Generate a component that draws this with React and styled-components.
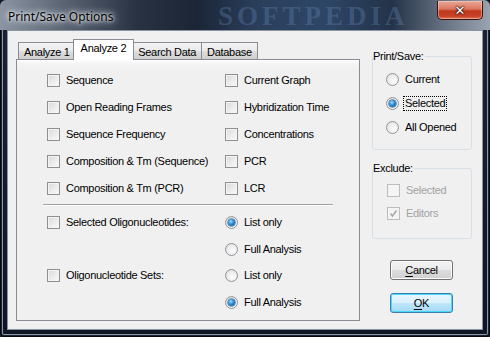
import React from 'react';
import styled, { createGlobalStyle, css } from 'styled-components';

const GlobalStyle = createGlobalStyle`
  html, body {
    margin: 0;
    padding: 0;
    background: #0f1828;
  }
  * {
    box-sizing: border-box;
  }
`;

const uiFont = `"Liberation Sans", Arial, sans-serif`;

const Window = styled.div`
  position: relative;
  width: 490px;
  height: 337px;
  background: linear-gradient(to bottom, #1b2435 0%, #121b2c 60%, #0e1626 100%);
  border-radius: 6px 6px 4px 4px;
  box-shadow: inset 0 0 0 1px #05080f, inset 0 0 0 2px #1a2333, inset 0 0 0 3px #8d97a6;
  overflow: hidden;
  display: flex;
  flex-direction: column;
`;

const TitleBar = styled.div`
  position: relative;
  height: 30px;
  display: flex;
  align-items: flex-start;
  background: linear-gradient(
    to right,
    #8b95a3 0%,
    #56606f 14%,
    #283243 28%,
    #1b2536 40%,
    #2a3e5a 52%,
    #2e4666 66%,
    #243349 80%,
    #6f7a89 92%,
    #9aa3b0 100%
  );
`;

const Title = styled.span`
  position: relative;
  z-index: 1;
  margin: 8px 0 0 8px;
  font-family: "Noto Sans", "Open Sans", sans-serif;
  font-size: 12px;
  color: #000;
  text-shadow: 0 0 6px #e8ecf0, 0 0 10px #dfe5ea, 0 0 3px #fff;
`;

const Watermark = styled.span`
  position: absolute;
  left: 218px;
  top: 2px;
  line-height: 28px;
  font-family: "Liberation Serif", "Times New Roman", serif;
  font-weight: bold;
  font-size: 27px;
  letter-spacing: 4px;
  color: rgba(110, 150, 200, 0.3);
  pointer-events: none;
`;

const CloseButton = styled.div`
  margin-left: auto;
  margin-right: 7px;
  margin-top: 1px;
  width: 46px;
  height: 19px;
  border: 1px solid #3b1210;
  border-top: none;
  border-radius: 0 0 5px 5px;
  background: linear-gradient(to bottom, #e9a796 0%, #d9775f 45%, #c2381b 55%, #c7432a 85%, #e0795a 100%);
  box-shadow: inset 0 0 0 1px rgba(255, 220, 210, 0.45);
  display: flex;
  align-items: center;
  justify-content: center;
  font-family: "DejaVu Sans", sans-serif;
  font-weight: bold;
  font-size: 13px;
  color: #fff;
  text-shadow: 0 0 1px #2a0a05, 0 0 2px #2a0a05, 0 0 2px #2a0a05;
  position: relative;
  z-index: 1;
`;

const Client = styled.div`
  margin: 0 7px 0 7px;
  height: 300px;
  background: #f0f0f0;
  border: 1px solid #8d949f;
  padding: 8px 10px 0 8px;
  display: flex;
  gap: 12px;
  font-family: ${uiFont};
  font-size: 11px;
  letter-spacing: -0.3px;
  color: #000;
`;

const LeftPane = styled.div`
  width: 344px;
  display: flex;
  flex-direction: column;
`;

const TabStrip = styled.div`
  height: 20px;
  display: flex;
  align-items: flex-end;
  padding-left: 2px;
  position: relative;
  z-index: 1;
`;

const Tab = styled.div`
  height: 17px;
  padding: 1px 5px 0;
  display: flex;
  align-items: center;
  justify-content: center;
  border: 1px solid #898c95;
  border-bottom: none;
  margin-right: -1px;
  background: linear-gradient(to bottom, #f2f2f2 0%, #ebebeb 50%, #dddddd 51%, #cfcfcf 100%);
  ${(p) =>
    p.$active &&
    css`
      height: 21px;
      margin: 0 -2px 0 -2px;
      padding: 0 7px 4px;
      background: #fff;
      position: relative;
      z-index: 2;
      top: 1px;
    `}
`;

const Panel = styled.div`
  height: 262px;
  border: 1px solid #898c95;
  background: linear-gradient(to bottom, #ffffff 0px, #f5f5f5 3px, #f0f0f0 10px);
  padding: 7px 0 0 30px;
`;

const OptionGrid = styled.div`
  display: grid;
  grid-template-columns: 178px 1fr;
  grid-template-rows: repeat(5, 27px) 7px repeat(4, 26.7px);
`;

const Cell = styled.label`
  display: flex;
  align-items: center;
  gap: 4px;
  white-space: nowrap;
  color: ${(p) => (p.$disabled ? '#a2a2a2' : '#000')};
`;

const Box = styled.span`
  width: 13px;
  height: 13px;
  flex: none;
  border: 1px solid ${(p) => (p.$disabled ? '#bcbcbc' : '#8e8f8f')};
  background: ${(p) =>
    p.$disabled ? '#f4f4f4' : 'linear-gradient(135deg, #d8d8d8 0%, #e9e9e9 45%, #fafafa 100%)'};
  box-shadow: inset 0 0 0 1px #f4f4f4;
  display: flex;
  align-items: center;
  justify-content: center;
`;

const Radio = styled.span`
  width: 13px;
  height: 13px;
  flex: none;
  border-radius: 50%;
  border: 1px solid #8f9499;
  background: radial-gradient(circle at 60% 65%, #fdfdfd 0%, #ececec 55%, #d4d4d4 100%);
  display: flex;
  align-items: center;
  justify-content: center;
  ${(p) =>
    p.$on &&
    css`
      &::after {
        content: '';
        width: 7px;
        height: 7px;
        border-radius: 50%;
        background: radial-gradient(circle at 40% 35%, #9be0ff 0%, #2a8ad6 45%, #0b4f9b 100%);
        box-shadow: 0 0 0 0.5px #0f3f73;
      }
    `}
`;

const Text = styled.span`
  padding: 0 1px;
  border: 1px dotted ${(p) => (p.$focus ? '#000' : 'transparent')};
  line-height: 13px;
`;

const SepRow = styled.div`
  grid-column: 1 / -1;
  display: flex;
`;

const Separator = styled.div`
  width: 290px;
  height: 2px;
  margin: 2px 0 0 -4px;
  border-top: 1px solid #a0a0a0;
  border-bottom: 1px solid #fff;
`;

const RightPane = styled.div`
  width: 100px;
  padding-top: 12px;
  display: flex;
  flex-direction: column;
`;

const Group = styled.fieldset`
  margin: 0;
  padding: 0;
  border: 1px solid #d5dfe5;
  border-radius: 3px;
  height: ${(p) => p.$h}px;
  & + & {
    margin-top: 13px;
  }
`;

const Legend = styled.legend`
  padding: 0 1px 0 0;
  margin-left: 0;
  line-height: 11px;
`;

const GroupBody = styled.div`
  display: flex;
  flex-direction: column;
  padding: ${(p) => p.$pad};
  gap: ${(p) => p.$gap}px;
`;

const ButtonStack = styled.div`
  display: flex;
  flex-direction: column;
  gap: 13px;
  padding: 21px 0 0 18px;
`;

const PushButton = styled.div`
  width: 63px;
  height: 20px;
  border: 1px solid ${(p) => (p.$default ? '#3c7fb1' : '#707070')};
  border-radius: 3px;
  background: linear-gradient(to bottom, #f2f2f2 0%, #ebebeb 48%, #dddddd 52%, #cfcfcf 100%);
  box-shadow: inset 0 0 0 1px ${(p) => (p.$default ? '#48d8fb' : '#fcfcfc')};
  display: flex;
  align-items: center;
  justify-content: center;
  u {
    text-decoration: underline;
    text-underline-offset: 2px;
  }
  ${(p) =>
    p.$default &&
    css`
      background: linear-gradient(to bottom, #eaf6fd 0%, #d9f0fc 48%, #bee6fd 52%, #a7d9f5 100%);
    `}
`;

const Check = () => (
  <svg width="9" height="9" viewBox="0 0 9 9">
    <path d="M1.5 4.5 L3.5 7 L7.5 1.5" fill="none" stroke="#a8a8a8" strokeWidth="1.6" />
  </svg>
);

const CheckItem = ({ label, checked, disabled }) => (
  <Cell $disabled={disabled}>
    <Box $disabled={disabled}>{checked && <Check />}</Box>
    <Text>{label}</Text>
  </Cell>
);

const RadioItem = ({ label, on, focus }) => (
  <Cell>
    <Radio $on={on} />
    <Text $focus={focus}>{label}</Text>
  </Cell>
);

const pairs = [
  ['Sequence', 'Current Graph'],
  ['Open Reading Frames', 'Hybridization Time'],
  ['Sequence Frequency', 'Concentrations'],
  ['Composition & Tm (Sequence)', 'PCR'],
  ['Composition & Tm (PCR)', 'LCR'],
];

const tabs = ['Analyze 1', 'Analyze 2', 'Search Data', 'Database'];

export default function App() {
  return (
    <>
      <GlobalStyle />
      <Window>
        <TitleBar>
          <Watermark>SOFTPEDIA</Watermark>
          <Title>Print/Save Options</Title>
          <CloseButton>✕</CloseButton>
        </TitleBar>
        <Client>
          <LeftPane>
            <TabStrip>
              {tabs.map((t) => (
                <Tab key={t} $active={t === 'Analyze 2'}>
                  {t}
                </Tab>
              ))}
            </TabStrip>
            <Panel>
              <OptionGrid>
                {pairs.map(([a, b]) => (
                  <React.Fragment key={a}>
                    <CheckItem label={a} />
                    <CheckItem label={b} />
                  </React.Fragment>
                ))}
                <SepRow>
                  <Separator />
                </SepRow>
                <CheckItem label="Selected Oligonucleotides:" />
                <RadioItem label="List only" on />
                <span />
                <RadioItem label="Full Analysis" />
                <CheckItem label="Oligonucleotide Sets:" />
                <RadioItem label="List only" />
                <span />
                <RadioItem label="Full Analysis" on />
              </OptionGrid>
            </Panel>
          </LeftPane>
          <RightPane>
            <Group $h={99}>
              <Legend>Print/Save:</Legend>
              <GroupBody $pad="10px 0 0 13px" $gap={9}>
                <RadioItem label="Current" />
                <RadioItem label="Selected" on focus />
                <RadioItem label="All Opened" />
              </GroupBody>
            </Group>
            <Group $h={76}>
              <Legend>Exclude:</Legend>
              <GroupBody $pad="9px 0 0 14px" $gap={8}>
                <CheckItem label="Selected" disabled />
                <CheckItem label="Editors" checked disabled />
              </GroupBody>
            </Group>
            <ButtonStack>
              <PushButton>
                <span>
                  <u>C</u>ancel
                </span>
              </PushButton>
              <PushButton $default>
                <span>
                  <u>O</u>K
                </span>
              </PushButton>
            </ButtonStack>
          </RightPane>
        </Client>
      </Window>
    </>
  );
}
